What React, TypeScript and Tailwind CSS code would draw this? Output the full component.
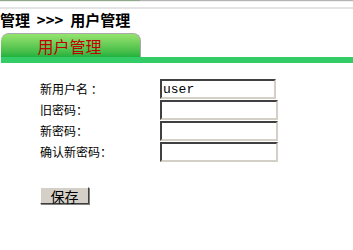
const fields = [
  { label: "新用户名 ：", value: "user", w: "w-[116px]" },
  { label: "旧密码：", value: "", w: "w-[118px]" },
  { label: "新密码：", value: "", w: "w-[118px]" },
  { label: "确认新密码：", value: "", w: "w-[118px]" },
];

const cjk = { fontFamily: '"Noto Sans CJK SC", "Noto Sans", sans-serif' };

export default function App() {
  return (
    <div className="w-[353px] h-[250px] bg-white overflow-hidden" style={cjk}>
      {/* top strip */}
      <div className="flex h-[1px]">
        <div className="w-[140px] bg-[#8fa88a]" />
        <div className="flex-1 bg-[#b4b4b4]" />
      </div>
      <div className="h-[1px] bg-[#f0f0f0]" />
      <div className="h-[5px]" />
      <div className="h-[2px] bg-[#e4e4e4]" />

      {/* breadcrumb */}
      <div className="h-[20px] flex items-center text-[15px] font-bold text-black leading-none">
        管理&nbsp;&nbsp;&gt;&gt;&gt;&nbsp;&nbsp;用户管理
      </div>

      {/* tab */}
      <div className="pl-[1px] pt-[4px]">
        <div className="w-[140px] h-[24px] rounded-t-[8px] border-t border-r border-[#a8a8a8] bg-gradient-to-b from-[#94e46e] to-[#1fb23e] flex items-center justify-center text-[16px] leading-none text-[#c00000] pr-[2px]">
          用户管理
        </div>
      </div>
      <div className="ml-[1px] h-[6px] bg-[#33cc66]" />

      {/* form */}
      <div className="pl-[40px] pt-[16px] flex flex-col gap-[1px]">
        {fields.map((f) => (
          <div key={f.label} className="flex items-center h-[20px]">
            <div className="w-[120px] text-[12px] text-black leading-none">{f.label}</div>
            <input
              defaultValue={f.value}
              className={`${f.w} h-[20px] bg-white border-2 border-t-[#404040] border-l-[#404040] border-r-[#d4d0c8] border-b-[#d4d0c8] px-[1px] text-[13px] text-black outline-none`}
              style={{ fontFamily: '"Liberation Mono", monospace' }}
            />
          </div>
        ))}
      </div>

      <div className="pl-[40px] pt-[25px]">
        <button className="w-[49px] h-[17px] bg-[#d4d0c8] border border-t-white border-l-white border-r-[#404040] border-b-[#404040] shadow-[1px_1px_0_#808080] text-[14px] leading-none text-black flex items-center justify-center">
          保存
        </button>
      </div>
    </div>
  );
}
